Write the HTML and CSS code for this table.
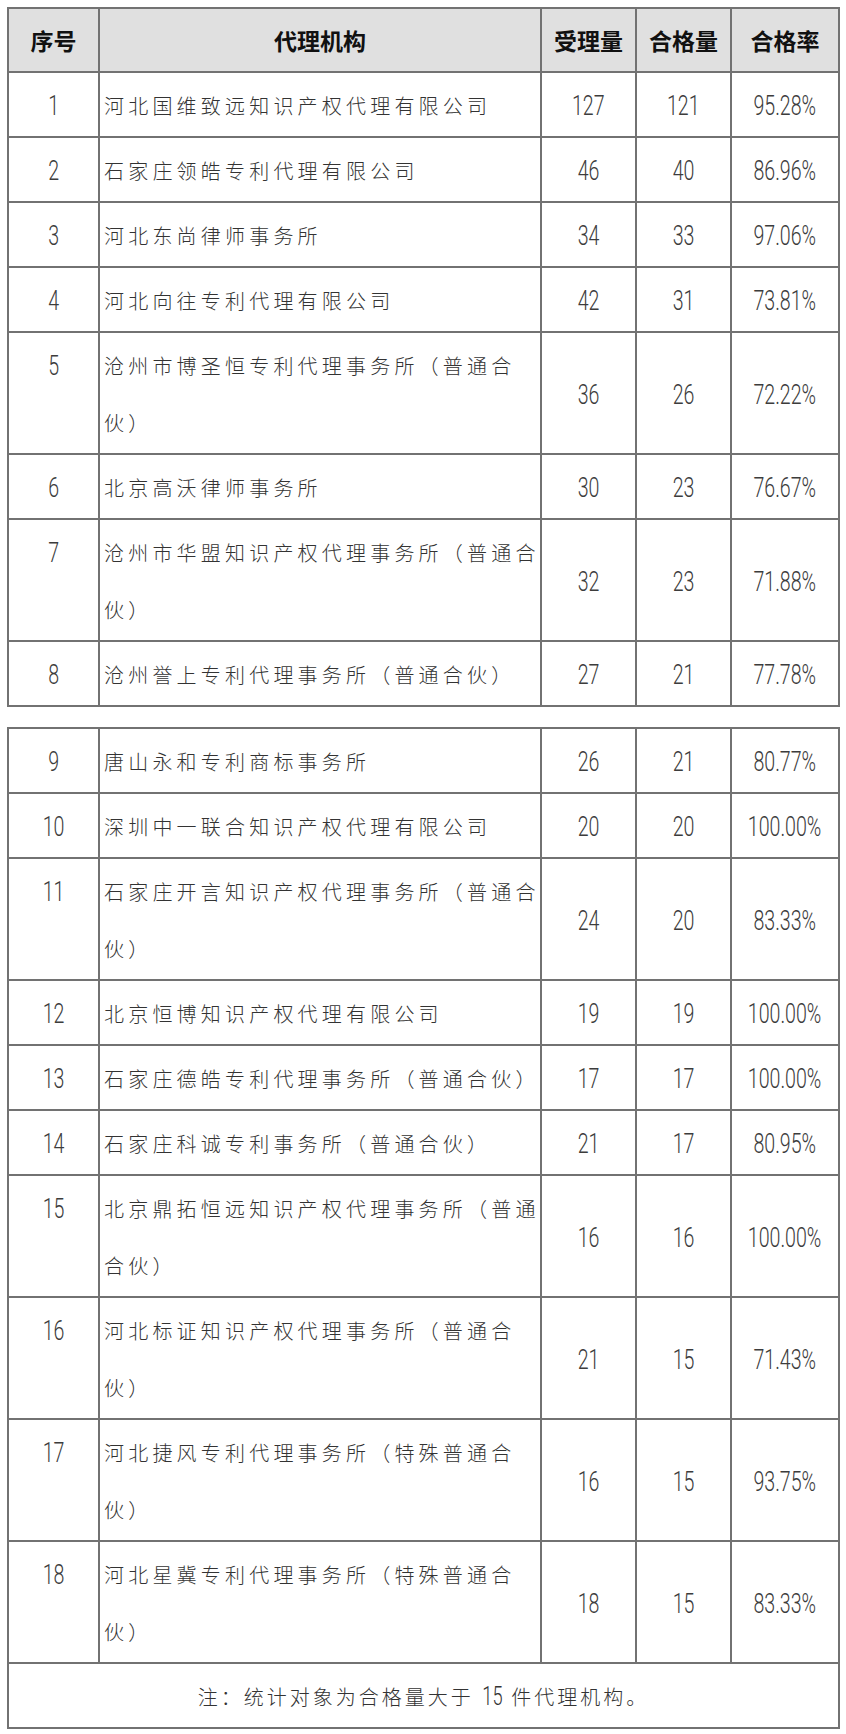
FILE: index.html
```html
<!DOCTYPE html>
<html lang="zh-CN">
<head>
<meta charset="utf-8">
<title>代理机构合格率</title>
<link rel="stylesheet" href="styles.css">
</head>
<body>
<div class="page">
<table class="grid">
<colgroup><col class="c1"><col class="c2"><col class="c3"><col class="c4"><col class="c5"></colgroup>
<thead>
<tr class="head"><th>序号</th><th>代理机构</th><th>受理量</th><th>合格量</th><th>合格率</th></tr>
</thead>
<tbody>
<tr><td class="no"><span class="n">1</span></td><td class="name">河北国维致远知识产权代理有限公司</td><td class="num"><span class="n">127</span></td><td class="num"><span class="n">121</span></td><td class="num"><span class="n">95.28%</span></td></tr>
<tr><td class="no"><span class="n">2</span></td><td class="name">石家庄领皓专利代理有限公司</td><td class="num"><span class="n">46</span></td><td class="num"><span class="n">40</span></td><td class="num"><span class="n">86.96%</span></td></tr>
<tr><td class="no"><span class="n">3</span></td><td class="name">河北东尚律师事务所</td><td class="num"><span class="n">34</span></td><td class="num"><span class="n">33</span></td><td class="num"><span class="n">97.06%</span></td></tr>
<tr><td class="no"><span class="n">4</span></td><td class="name">河北向往专利代理有限公司</td><td class="num"><span class="n">42</span></td><td class="num"><span class="n">31</span></td><td class="num"><span class="n">73.81%</span></td></tr>
<tr><td class="no"><span class="n">5</span></td><td class="name">沧州市博圣恒专利代理事务所（普通合伙）</td><td class="num"><span class="n">36</span></td><td class="num"><span class="n">26</span></td><td class="num"><span class="n">72.22%</span></td></tr>
<tr><td class="no"><span class="n">6</span></td><td class="name">北京高沃律师事务所</td><td class="num"><span class="n">30</span></td><td class="num"><span class="n">23</span></td><td class="num"><span class="n">76.67%</span></td></tr>
<tr><td class="no"><span class="n">7</span></td><td class="name">沧州市华盟知识产权代理事务所（普通合伙）</td><td class="num"><span class="n">32</span></td><td class="num"><span class="n">23</span></td><td class="num"><span class="n">71.88%</span></td></tr>
<tr><td class="no"><span class="n">8</span></td><td class="name">沧州誉上专利代理事务所（普通合伙）</td><td class="num"><span class="n">27</span></td><td class="num"><span class="n">21</span></td><td class="num"><span class="n">77.78%</span></td></tr>
</tbody>
</table>

<table class="grid second">
<colgroup><col class="c1"><col class="c2"><col class="c3"><col class="c4"><col class="c5"></colgroup>
<tbody>
<tr><td class="no"><span class="n">9</span></td><td class="name">唐山永和专利商标事务所</td><td class="num"><span class="n">26</span></td><td class="num"><span class="n">21</span></td><td class="num"><span class="n">80.77%</span></td></tr>
<tr><td class="no"><span class="n">10</span></td><td class="name">深圳中一联合知识产权代理有限公司</td><td class="num"><span class="n">20</span></td><td class="num"><span class="n">20</span></td><td class="num"><span class="n">100.00%</span></td></tr>
<tr><td class="no"><span class="n">11</span></td><td class="name">石家庄开言知识产权代理事务所（普通合伙）</td><td class="num"><span class="n">24</span></td><td class="num"><span class="n">20</span></td><td class="num"><span class="n">83.33%</span></td></tr>
<tr><td class="no"><span class="n">12</span></td><td class="name">北京恒博知识产权代理有限公司</td><td class="num"><span class="n">19</span></td><td class="num"><span class="n">19</span></td><td class="num"><span class="n">100.00%</span></td></tr>
<tr><td class="no"><span class="n">13</span></td><td class="name">石家庄德皓专利代理事务所（普通合伙）</td><td class="num"><span class="n">17</span></td><td class="num"><span class="n">17</span></td><td class="num"><span class="n">100.00%</span></td></tr>
<tr><td class="no"><span class="n">14</span></td><td class="name">石家庄科诚专利事务所（普通合伙）</td><td class="num"><span class="n">21</span></td><td class="num"><span class="n">17</span></td><td class="num"><span class="n">80.95%</span></td></tr>
<tr><td class="no"><span class="n">15</span></td><td class="name">北京鼎拓恒远知识产权代理事务所（普通合伙）</td><td class="num"><span class="n">16</span></td><td class="num"><span class="n">16</span></td><td class="num"><span class="n">100.00%</span></td></tr>
<tr><td class="no"><span class="n">16</span></td><td class="name">河北标证知识产权代理事务所（普通合伙）</td><td class="num"><span class="n">21</span></td><td class="num"><span class="n">15</span></td><td class="num"><span class="n">71.43%</span></td></tr>
<tr><td class="no"><span class="n">17</span></td><td class="name">河北捷风专利代理事务所（特殊普通合伙）</td><td class="num"><span class="n">16</span></td><td class="num"><span class="n">15</span></td><td class="num"><span class="n">93.75%</span></td></tr>
<tr><td class="no"><span class="n">18</span></td><td class="name">河北星冀专利代理事务所（特殊普通合伙）</td><td class="num"><span class="n">18</span></td><td class="num"><span class="n">15</span></td><td class="num"><span class="n">83.33%</span></td></tr>
<tr><td class="note" colspan="5">注：统计对象为合格量大于 <span class="nn">15</span> 件代理机构。</td></tr>
</tbody>
</table>
</div>
</body>
</html>
```

FILE: styles.css
```css
html, body {
  margin: 0;
  padding: 0;
  background: #ffffff;
}

.page {
  padding: 7px 0 0 7px;
}

.grid {
  border-collapse: collapse;
  table-layout: fixed;
  width: 833px;
  color: #333333;
  font-family: "Noto Sans CJK SC", "Noto Sans", sans-serif;
}

.second {
  margin-top: 20px;
}

.c1 { width: 91px; }
.c2 { width: 442px; }
.c3 { width: 95px; }
.c4 { width: 95px; }
.c5 { width: 108px; }

.grid th,
.grid td {
  border: 2px solid #727272;
  padding: 4px 0 2px;
  line-height: 57px;
}

.head th {
  background: #e0e0e0;
  color: #111111;
  font-weight: 700;
  font-size: 23px;
  line-height: 56px;
  padding: 3px 0;
  text-align: center;
}

.no,
.num {
  text-align: center;
  font-family: Roboto, "Liberation Sans", sans-serif;
  font-weight: 300;
  font-size: 28px;
  color: #3c3c3c;
}

.no {
  vertical-align: top;
}

.num {
  vertical-align: middle;
}

.n {
  display: inline-block;
  transform: scaleX(0.7);
}

.name {
  text-align: left;
  vertical-align: top;
  padding-left: 4px !important;
  font-size: 20px;
  font-weight: 300;
  letter-spacing: 4.2px;
  color: #333333;
}

.note {
  text-align: center;
  font-size: 20px;
  font-weight: 300;
  letter-spacing: 3px;
  color: #333333;
}

.nn {
  display: inline-block;
  line-height: 1;
  font-family: Roboto, "Liberation Sans", sans-serif;
  font-weight: 300;
  font-size: 26px;
  letter-spacing: 0;
  margin: 0 -3px;
  transform: scaleX(0.7);
}
```
